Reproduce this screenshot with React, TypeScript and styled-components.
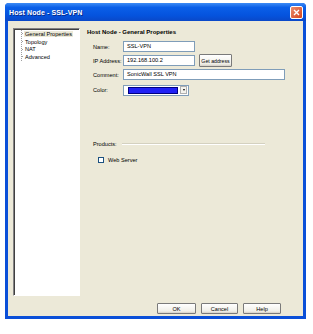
import styled, { createGlobalStyle } from 'styled-components';

const GlobalStyle = createGlobalStyle`
    html, body {
        margin: 0;
        padding: 0;
        background: #ffffff;
    }
    body {
        font-family: "Liberation Sans", Arial, sans-serif;
    }
`

const Window = styled.div`
    margin: 3px 0 0 5px;
    width: 301px;
    height: 316px;
    box-sizing: border-box;
    display: flex;
    flex-direction: column;
    background: #0a4fd8;
    border-radius: 4px 4px 0 0;
    overflow: hidden;
`
const TitleBar = styled.div`
    height: 18px;
    flex: none;
    display: flex;
    align-items: center;
    justify-content: space-between;
    padding: 0 3px 0 4px;
    background: linear-gradient(#3d8bf5 0%, #0a5fe8 25%, #0553dd 70%, #0a48c8 100%);
`
const Title = styled.span`
    color: #ffffff;
    font-weight: bold;
    font-size: 7px;
    letter-spacing: 0.1px;
    text-shadow: 1px 1px 0 #0a2a8a;
`
const CloseButton = styled.div`
    width: 11px;
    height: 11px;
    margin-top: 1px;
    border: 1px solid #ffffff;
    border-radius: 2px;
    background: linear-gradient(135deg, #e98b6c, #d6461e);
    display: flex;
    align-items: center;
    justify-content: center;
`
const Body = styled.div`
    flex: 1;
    margin: 0 3px 3px 3px;
    background: #ece9d8;
    display: flex;
    flex-direction: column;
    padding: 7px 22px 0 5px;
`
const Main = styled.div`
    display: flex;
    height: 268px;
`
const TreePanel = styled.div`
    flex: none;
    width: 67px;
    box-sizing: border-box;
    background: #ffffff;
    border: 1px solid;
    border-color: #848284 #ffffff #ffffff #848284;
    box-shadow: inset 1px 1px 0 #404040;
    padding: 1px 0 0 7px;
`
const TreeList = styled.div`
    border-left: 1px dotted #a0a0a0;
    display: flex;
    flex-direction: column;
`
const TreeItem = styled.div<{ $selected?: boolean }>`
    display: flex;
    align-items: center;
    height: 7.7px;
    font-size: 5.6px;
    color: #000000;
    &::before {
        content: "";
        width: 1px;
        border-top: 1px dotted #a0a0a0;
        margin-right: 1px;
    }
    span {
        padding: 0 1px;
        background: ${p => (p.$selected ? '#ece9d8' : 'transparent')};
    }
`
const Content = styled.div`
    flex: 1;
    min-width: 0;
    padding: 0 0 0 7px;
    display: flex;
    flex-direction: column;
`
const Heading = styled.div`
    font-weight: bold;
    font-size: 6px;
    line-height: 8px;
    color: #000000;
`
const Form = styled.div`
    margin: 5px 0 0 6px;
    display: grid;
    grid-template-columns: 30px auto;
    grid-auto-rows: 11px;
    row-gap: 3px;
    align-items: center;
`
const Label = styled.span<{ $offset?: number }>`
    font-size: 5.6px;
    color: #000000;
    margin-top: ${p => p.$offset ?? 0}px;
`
const Field = styled.div<{ $offset?: number }>`
    display: flex;
    align-items: center;
    margin-top: ${p => p.$offset ?? 0}px;
`
const TextBox = styled.div<{ $width: number }>`
    width: ${p => p.$width}px;
    height: 11px;
    box-sizing: border-box;
    background: #ffffff;
    border: 1px solid #7f9db9;
    font-size: 5.6px;
    line-height: 9px;
    padding-left: 3px;
    color: #000000;
`
const Button = styled.div<{ $width: number; $height?: number }>`
    width: ${p => p.$width}px;
    height: ${p => p.$height ?? 11}px;
    box-sizing: border-box;
    border: 1px solid #7a7a7a;
    border-radius: 1px;
    background: linear-gradient(#ffffff, #f0efe8 80%, #d6d0c5);
    font-size: 5.6px;
    display: flex;
    align-items: center;
    justify-content: center;
    color: #000000;
    white-space: nowrap;
`
const GetButton = styled(Button)`
    margin-left: 4px;
    font-size: 5.2px;
`
const ColorCombo = styled.div`
    width: 66px;
    height: 11px;
    box-sizing: border-box;
    background: #ffffff;
    border: 1px solid #7f9db9;
    display: flex;
    align-items: center;
    padding: 0 1px 0 4px;
`
const Swatch = styled.div`
    width: 50px;
    height: 7px;
    background: #2121f5;
    border: 1px solid #000080;
    box-sizing: border-box;
`
const ComboArrow = styled.div`
    margin-left: auto;
    width: 7px;
    height: 8px;
    box-sizing: border-box;
    border: 1px solid #b0b0b0;
    background: #f4f3ee;
    display: flex;
    align-items: center;
    justify-content: center;
    &::after {
        content: "";
        border-left: 1.5px solid transparent;
        border-right: 1.5px solid transparent;
        border-top: 2px solid #000000;
    }
`
const ProductsRow = styled.div`
    margin: 47px 0 0 6px;
    display: flex;
    align-items: center;
    width: 172px;
`
const Rule = styled.div`
    flex: 1;
    margin-left: 5px;
    border-top: 1px solid #d4d1c0;
    border-bottom: 1px solid #ffffff;
`
const CheckRow = styled.div`
    margin: 10px 0 0 11px;
    display: flex;
    align-items: center;
    gap: 4px;
`
const CheckBox = styled.div`
    width: 6px;
    height: 6px;
    box-sizing: border-box;
    border: 1px solid #1c5180;
    background: #ffffff;
`
const Footer = styled.div`
    margin-top: 7px;
    display: flex;
    justify-content: flex-end;
    gap: 5px;
`

export default function App() {
    return (
        <>
            <GlobalStyle />
            <Window>
                <TitleBar>
                    <Title>Host Node - SSL-VPN</Title>
                    <CloseButton>
                        <svg width="7" height="7" viewBox="0 0 7 7">
                            <path d="M1 1 L6 6 M6 1 L1 6" stroke="#ffffff" strokeWidth="1.4" />
                        </svg>
                    </CloseButton>
                </TitleBar>
                <Body>
                    <Main>
                        <TreePanel>
                            <TreeList>
                                <TreeItem $selected><span>General Properties</span></TreeItem>
                                <TreeItem><span>Topology</span></TreeItem>
                                <TreeItem><span>NAT</span></TreeItem>
                                <TreeItem><span>Advanced</span></TreeItem>
                            </TreeList>
                        </TreePanel>
                        <Content>
                            <Heading>Host Node - General Properties</Heading>
                            <Form>
                                <Label>Name:</Label>
                                <Field><TextBox $width={72}>SSL-VPN</TextBox></Field>
                                <Label>IP Address:</Label>
                                <Field>
                                    <TextBox $width={72}>192.168.100.2</TextBox>
                                    <GetButton $width={33} $height={13}>Get address</GetButton>
                                </Field>
                                <Label>Comment:</Label>
                                <Field><TextBox $width={162}>SonicWall SSL VPN</TextBox></Field>
                                <Label $offset={3}>Color:</Label>
                                <Field $offset={3}>
                                    <ColorCombo>
                                        <Swatch />
                                        <ComboArrow />
                                    </ColorCombo>
                                </Field>
                            </Form>
                            <ProductsRow>
                                <Label>Products:</Label>
                                <Rule />
                            </ProductsRow>
                            <CheckRow>
                                <CheckBox />
                                <Label>Web Server</Label>
                            </CheckRow>
                        </Content>
                    </Main>
                    <Footer>
                        <Button $width={39}>OK</Button>
                        <Button $width={37}>Cancel</Button>
                        <Button $width={38}>Help</Button>
                    </Footer>
                </Body>
            </Window>
        </>
    )
}
